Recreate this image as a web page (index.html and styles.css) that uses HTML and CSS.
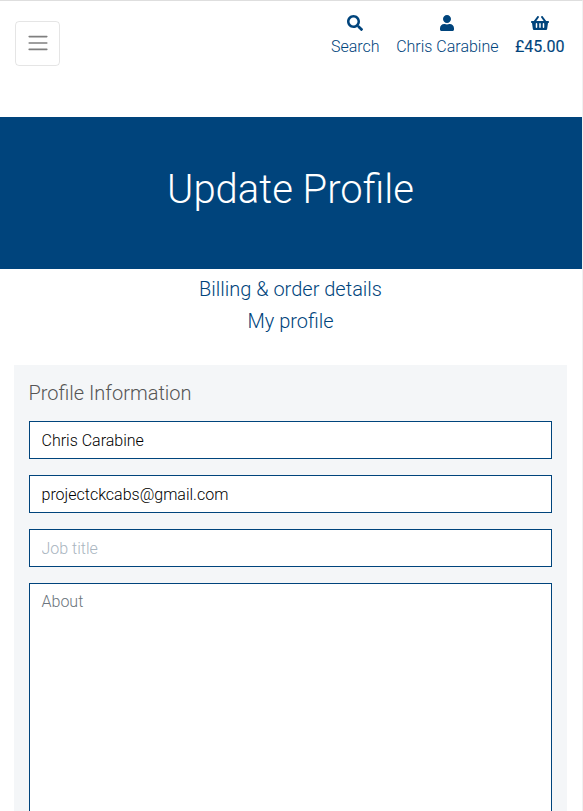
FILE: index.html
```html
<!DOCTYPE html>
<html lang="en">
<head>
<meta charset="utf-8">
<title>Update Profile</title>
<link rel="stylesheet" href="styles.css">
</head>
<body>
<div class="page">
  <header class="topbar">
    <button class="toggler" type="button" aria-label="Toggle navigation">
      <svg viewBox="0 0 30 30" width="30" height="30"><path d="M4 7h22M4 15h22M4 23h22" stroke="rgba(0,0,0,.5)" stroke-width="2" stroke-linecap="round" stroke-miterlimit="10"/></svg>
    </button>
    <nav class="actions">
      <a class="action" href="#">
        <svg viewBox="0 0 512 512" width="16" height="16"><path d="M505 442.7L405.300 343c-4.500-4.500-10.600-7-17-7H372c27.600-35.300 44-79.700 44-128C416 93.100 322.900 0 208 0S0 93.100 0 208s93.100 208 208 208c48.300 0 92.700-16.400 128-44v16.300c0 6.400 2.500 12.500 7 17l99.700 99.700c9.400 9.400 24.600 9.400 33.900 0l28.300-28.300c9.400-9.400 9.400-24.600.1-34zM208 336c-70.700 0-128-57.200-128-128 0-70.700 57.200-128 128-128 70.700 0 128 57.200 128 128 0 70.700-57.200 128-128 128z"/></svg>
        <span>Search</span>
      </a>
      <a class="action" href="#">
        <svg viewBox="0 0 448 512" width="14" height="16"><path d="M224 256c70.700 0 128-57.300 128-128S294.700 0 224 0 96 57.300 96 128s57.300 128 128 128zm89.600 32h-16.700c-22.200 10.200-46.900 16-72.900 16s-50.600-5.800-72.900-16h-16.700C60.200 288 0 348.200 0 422.400V464c0 26.500 21.500 48 48 48h352c26.500 0 48-21.500 48-48v-41.600c0-74.200-60.200-134.400-134.400-134.400z"/></svg>
        <span>Chris Carabine</span>
      </a>
      <a class="action total" href="#">
        <svg viewBox="0 0 576 512" width="18" height="16"><path d="M576 216v16c0 13.255-10.745 24-24 24h-8l-26.113 182.788C514.509 462.435 494.257 480 470.370 480H105.630c-23.887 0-44.139-17.565-47.518-41.212L32 256h-8c-13.255 0-24-10.745-24-24v-16c0-13.255 10.745-24 24-24h67.341l106.780-146.821c10.395-14.292 30.407-17.453 44.701-7.058 14.293 10.395 17.453 30.408 7.058 44.701L170.477 192h235.046L326.120 82.821c-10.395-14.292-7.234-34.306 7.059-44.701 14.291-10.395 34.306-7.235 44.701 7.058L484.659 192H552c13.255 0 24 10.745 24 24zM312 392V280c0-13.255-10.745-24-24-24s-24 10.745-24 24v112c0 13.255 10.745 24 24 24s24-10.745 24-24zm112 0V280c0-13.255-10.745-24-24-24s-24 10.745-24 24v112c0 13.255 10.745 24 24 24s24-10.745 24-24zm-224 0V280c0-13.255-10.745-24-24-24s-24 10.745-24 24v112c0 13.255 10.745 24 24 24s24-10.745 24-24z"/></svg>
        <span>£45.00</span>
      </a>
    </nav>
  </header>
  <div class="banner"><h1>Update Profile</h1></div>
  <nav class="tabs">
    <a href="#">Billing &amp; order details</a>
    <a href="#">My profile</a>
  </nav>
  <form class="panel">
    <h2>Profile Information</h2>
    <input class="field" type="text" value="Chris Carabine" aria-label="Name">
    <input class="field" type="text" value="projectckcabs@gmail.com" aria-label="Email">
    <input class="field" type="text" placeholder="Job title">
    <textarea class="field about" placeholder="About"></textarea>
  </form>
</div>
</body>
</html>
```
FILE: styles.css
```css
* { box-sizing: border-box; }

html, body { height: 100%; }

body {
  margin: 0;
  overflow: hidden;
  font: 300 16px/24px Roboto, sans-serif;
  color: #00447c;
  background: #fff;
}

a { color: inherit; text-decoration: none; }

.page {
  height: 811px;
  overflow: hidden;
  border-top: 1px solid #dedede;
  border-right: 1px solid #f1f1f1;
}

.topbar {
  display: flex;
  justify-content: space-between;
  align-items: flex-start;
  height: 116px;
  padding: 14px 17.5px 0 15px;
}

.toggler {
  display: flex;
  align-items: center;
  justify-content: center;
  width: 45px;
  height: 45px;
  margin-top: 6px;
  padding: 0 0 1px;
  border: 1px solid rgba(0, 0, 0, .1);
  border-radius: 4px;
  background: none;
}

.toggler svg { width: 24px; height: 24px; }

.actions { display: flex; gap: 16.5px; }

.action {
  display: flex;
  flex-direction: column;
  align-items: center;
}

.action svg { fill: #00447c; margin-bottom: 4px; }

.total {
  font-weight: 400;
  -webkit-text-stroke: .15px #00447c;
}

.banner {
  display: flex;
  align-items: center;
  justify-content: center;
  height: 152px;
  padding: 0 1px 6px 0;
  background: #00447c;
}

h1 {
  margin: 0;
  font-size: 40px;
  font-weight: 300;
  line-height: 48px;
  color: #fff;
}

.tabs {
  display: flex;
  flex-direction: column;
  align-items: center;
  padding: 4px 1px 0 0;
  font-size: 20px;
  line-height: 32px;
}

.panel {
  display: flex;
  flex-direction: column;
  gap: 16px;
  height: 600px;
  margin: 28px 15px 0 14px;
  padding: 16px 15px;
  background: #f4f6f8;
}

h2 {
  margin: 0 0 0 -.5px;
  font-size: 20px;
  font-weight: 300;
  line-height: 24px;
  color: #555;
}

.field {
  flex: none;
  width: 100%;
  height: 38px;
  margin: 0;
  padding: 6px 11.5px;
  border: 1px solid #00447c;
  border-radius: 0;
  outline: 0;
  background: #fff;
  font: inherit;
  color: #000;
}

.field::placeholder { color: #a9b5c0; opacity: 1; }

.about { height: 260px; resize: none; }

.about::placeholder { color: #6c757d; }
```
